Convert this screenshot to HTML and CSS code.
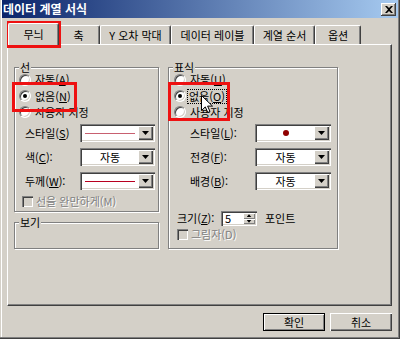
FILE: index.html
```html
<!DOCTYPE html>
<html lang="ko">
<head>
<meta charset="utf-8">
<title>데이터 계열 서식</title>
<link rel="stylesheet" href="styles.css">
</head>
<body>
<div class="window">
  <div class="titlebar">
    <span class="title">데이터 계열 서식</span>
    <span class="close"><svg width="8" height="7" viewBox="0 0 8 7"><path d="M0 0h2l2 2 2-2h2L5 3.5 8 7H6L4 5 2 7H0l3-3.5z" fill="#000"/></svg></span>
  </div>

  <div class="tabs">
    <div class="tab active t-pattern">무늬</div>
    <div class="tab t-axis">축</div>
    <div class="tab t-error">Y 오차 막대</div>
    <div class="tab t-label">데이터 레이블</div>
    <div class="tab t-order">계열 순서</div>
    <div class="tab t-option">옵션</div>
  </div>

  <div class="panel">
    <div class="col-left">
      <div class="group g-line">
        <div class="legend">선</div>
        <div class="radios">
          <div class="radio-row"><span class="radio"></span><span>자동(<u>A</u>)</span></div>
          <div class="radio-row"><span class="radio checked"></span><span>없음(<u>N</u>)</span></div>
          <div class="radio-row"><span class="radio"></span><span>사용자 지정</span></div>
        </div>
        <div class="form f-left">
          <span class="lbl">스타일(<u>S</u>)</span>
          <div class="combo"><div class="field"><span class="line l-style"></span></div><span class="drop"></span></div>
          <span class="lbl">색(<u>C</u>):</span>
          <div class="combo"><div class="field">자동</div><span class="drop"></span></div>
          <span class="lbl">두께(<u>W</u>):</span>
          <div class="combo"><div class="field"><span class="line l-weight"></span></div><span class="drop"></span></div>
        </div>
        <div class="check-row disabled c-left"><span class="check"></span><span class="dtext">선을 완만하게(M)</span></div>
      </div>
      <div class="group g-view">
        <div class="legend">보기</div>
      </div>
    </div>

    <div class="group g-marker">
      <div class="legend">표식</div>
      <div class="radios r-right">
        <div class="radio-row"><span class="radio"></span><span>자동(<u>U</u>)</span></div>
        <div class="radio-row"><span class="radio checked"></span><span class="focus">없음(<u>O</u>)</span></div>
        <div class="radio-row"><span class="radio"></span><span>사용자 지정</span></div>
      </div>
      <div class="form f-right">
        <span class="lbl">스타일(<u>L</u>):</span>
        <div class="combo"><div class="field"><span class="dot"></span></div><span class="drop"></span></div>
        <span class="lbl">전경(<u>F</u>):</span>
        <div class="combo"><div class="field">자동</div><span class="drop"></span></div>
        <span class="lbl">배경(<u>B</u>):</span>
        <div class="combo"><div class="field">자동</div><span class="drop"></span></div>
      </div>
      <div class="size-row">
        <span class="size-lbl">크기(<u>Z</u>):</span>
        <div class="spin"><span class="val">5</span><span class="arrows"><span class="up"></span><span class="down"></span></span></div>
        <span class="unit">포인트</span>
      </div>
      <div class="check-row disabled c-right"><span class="check"></span><span class="dtext">그림자(D)</span></div>
    </div>
  </div>

  <div class="buttons">
    <button class="btn default">확인</button>
    <button class="btn">취소</button>
  </div>

  <div class="mark m-tab"></div>
  <div class="mark m-left"></div>
  <div class="mark m-right"></div>
  <svg class="cursor" width="13" height="19" viewBox="0 0 13 19"><path d="M0.5 0.5V15.5L4.3 11.9L6.8 17.5L9 16.5L6.6 11.1H11.5Z" fill="#fff" stroke="#000" stroke-width="1" stroke-linejoin="miter"/></svg>
</div>
</body>
</html>
```

FILE: styles.css
```css
* { box-sizing: border-box; }
html, body { margin: 0; padding: 0; }
body {
  width: 400px;
  height: 339px;
  overflow: hidden;
  background: #d4d0c8;
  font-family: "Noto Sans CJK KR", "Noto Sans", sans-serif;
  font-size: 11px;
  line-height: 13px;
  color: #000;
}
u { text-decoration: underline; text-underline-offset: 1px; }

.window {
  position: relative;
  width: 400px;
  height: 339px;
  background: #d4d0c8;
  padding: 0 3px 3px 3px;
  display: flex;
  flex-direction: column;
  box-shadow: inset -1px -1px 0 #404040, inset -2px -2px 0 #808080, inset 1px 0 0 #d4d0c8, inset 2px 0 0 #fff;
}

/* title bar */
.titlebar {
  height: 18px;
  margin: 0 -1px;
  padding: 0 2px 0 1px;
  display: flex;
  justify-content: space-between;
  background: linear-gradient(to right, #0a246a, #a6caf0);
}
.title {
  color: #fff;
  font-weight: bold;
  font-size: 12px;
  line-height: 18px;
}
.close {
  margin-top: 3px;
  width: 15px;
  height: 13px;
  background: #d4d0c8;
  display: flex;
  align-items: center;
  justify-content: center;
  box-shadow: inset -1px -1px 0 #404040, inset 1px 1px 0 #fff, inset -2px -2px 0 #808080;
}

/* tabs */
.tabs {
  margin-top: 5px;
  height: 22px;
  margin-bottom: -1px;
  padding-left: 7px;
  display: flex;
  align-items: flex-end;
}
.tab {
  height: 19px;
  margin-bottom: 1px;
  display: flex;
  align-items: center;
  justify-content: center;
  background: #d4d0c8;
  border-top: 1px solid #fff;
  border-left: 1px solid #fff;
  border-right: 1px solid #404040;
  border-radius: 2px 2px 0 0;
  box-shadow: inset -1px 0 0 #808080;
  white-space: nowrap;
}
.tab.active {
  position: relative;
  z-index: 1;
  height: 22px;
  margin: 0 -2px 0 -2px;
  padding-bottom: 1px;
}
.t-pattern { width: 51px; }
.t-axis { width: 43px; }
.t-error { width: 71px; }
.t-label { width: 83px; }
.t-order { width: 61px; }
.t-option { width: 46px; }

/* panel */
.panel {
  margin: 0 5px 0 4px;
  height: 262px;
  border-top: 1px solid #fff;
  border-left: 1px solid #fff;
  border-right: 1px solid #404040;
  border-bottom: 1px solid #404040;
  box-shadow: inset -1px -1px 0 #808080;
  padding: 22px 0 0 6px;
  display: flex;
  align-items: flex-start;
  gap: 9px;
}
.col-left {
  width: 145px;
  display: flex;
  flex-direction: column;
  gap: 10px;
}
.group {
  border: 1px solid #808080;
  box-shadow: inset 1px 1px 0 #fff, 1px 1px 0 #fff;
}
.g-line { height: 145px; }
.g-view { height: 27px; }
.g-marker { width: 170px; height: 182px; }

.legend {
  width: fit-content;
  margin: -7px 0 0 4px;
  padding: 0 1px;
  background: #d4d0c8;
  line-height: 13px;
}

/* radios */
.radios {
  margin-top: -3px;
  padding-left: 4px;
}
.r-right { padding-left: 5px; }
.radio-row {
  height: 16px;
  display: flex;
  align-items: center;
  gap: 4px;
}
.radio-row:first-child { height: 17px; }
.radio {
  position: relative;
  width: 12px;
  height: 12px;
  border-radius: 50%;
  background: #fff;
  border: 1px solid;
  border-color: #808080 #fff #fff #808080;
  box-shadow: inset 1px 1px 0 #404040, inset -1px -1px 0 #d4d0c8;
}
.radio.checked::after {
  content: "";
  position: absolute;
  left: 3px;
  top: 3px;
  width: 4px;
  height: 4px;
  border-radius: 50%;
  background: #000;
}
.focus {
  outline: 1px dotted #000;
  padding: 0 1px;
  margin-left: -2px;
}

/* form rows */
.form {
  margin-top: 4px;
  display: grid;
  grid-auto-rows: 18px;
  row-gap: 6px;
  align-items: center;
}
.f-left { grid-template-columns: 55px 75px; padding-left: 10px; }
.f-right { grid-template-columns: 65px 76px; padding-left: 21px; }
.lbl { white-space: nowrap; }
.combo {
  height: 18px;
  display: flex;
  padding: 2px;
  background: #fff;
  box-shadow: inset 1px 1px 0 #808080, inset 2px 2px 0 #404040, inset -1px -1px 0 #fff, inset -2px -2px 0 #d4d0c8;
}
.field {
  flex: 1;
  display: flex;
  align-items: center;
  justify-content: center;
}
.drop {
  width: 15px;
  background: #d4d0c8;
  display: flex;
  align-items: center;
  justify-content: center;
  box-shadow: inset 1px 1px 0 #fff, inset -1px -1px 0 #404040, inset -2px -2px 0 #808080;
}
.drop::after {
  content: "";
  width: 7px;
  height: 4px;
  background: #000;
  clip-path: polygon(0 0, 100% 0, 50% 100%);
}
.line { width: 50px; height: 1px; }
.l-style { background: #c86070; }
.l-weight { background: #b80020; }
.dot {
  width: 6px;
  height: 6px;
  border-radius: 50%;
  background: #900000;
}

/* checkboxes */
.check-row {
  display: flex;
  align-items: center;
  gap: 3px;
  height: 14px;
}
.c-left { margin-top: 4px; padding-left: 7px; }
.c-right { padding-left: 8px; height: 12px; margin-top: 2px; }
.check {
  width: 11px;
  height: 11px;
  background: #d4d0c8;
  box-shadow: inset 1px 1px 0 #808080, inset 2px 2px 0 #404040, inset -1px -1px 0 #fff, inset -2px -2px 0 #d4d0c8;
}
.dtext {
  color: #808080;
  text-shadow: 1px 1px 0 #fff;
}

/* size */
.size-row {
  margin-top: 21px;
  height: 15px;
  padding-left: 8px;
  display: flex;
  align-items: center;
}
.size-lbl { width: 44px; white-space: nowrap; }
.spin {
  width: 36px;
  height: 15px;
  display: flex;
  padding: 2px;
  background: #fff;
  box-shadow: inset 1px 1px 0 #808080, inset 2px 2px 0 #404040, inset -1px -1px 0 #fff, inset -2px -2px 0 #d4d0c8;
}
.val { flex: 1; padding-left: 2px; line-height: 11px; }
.arrows {
  width: 12px;
  display: flex;
  flex-direction: column;
}
.arrows span {
  flex: 1;
  background: #d4d0c8;
  display: flex;
  align-items: center;
  justify-content: center;
  box-shadow: inset 1px 1px 0 #fff, inset -1px -1px 0 #808080;
}
.arrows span::after {
  content: "";
  width: 5px;
  height: 3px;
  background: #000;
}
.arrows .up::after { clip-path: polygon(50% 0, 100% 100%, 0 100%); }
.arrows .down::after { clip-path: polygon(0 0, 100% 0, 50% 100%); }
.unit { margin-left: 8px; }

/* buttons */
.buttons {
  margin-top: 7px;
  margin-right: 5px;
  display: flex;
  justify-content: flex-end;
  gap: 5px;
}
.btn {
  width: 62px;
  height: 18px;
  padding: 0;
  border: none;
  background: #d4d0c8;
  font: inherit;
  color: #000;
  box-shadow: inset 1px 1px 0 #fff, inset -1px -1px 0 #404040, inset -2px -2px 0 #808080;
}
.btn.default {
  border: 1px solid #000;
  box-shadow: inset 1px 1px 0 #fff, inset -1px -1px 0 #808080;
}

/* annotations */
.mark {
  position: absolute;
  border: 3px solid #ee1111;
}
.m-tab { left: 7px; top: 21px; width: 54px; height: 27px; }
.m-left { left: 12px; top: 82px; width: 65px; height: 30px; }
.m-right { left: 168px; top: 82px; width: 62px; height: 39px; }
.cursor {
  position: absolute;
  left: 201px;
  top: 95px;
}
```
